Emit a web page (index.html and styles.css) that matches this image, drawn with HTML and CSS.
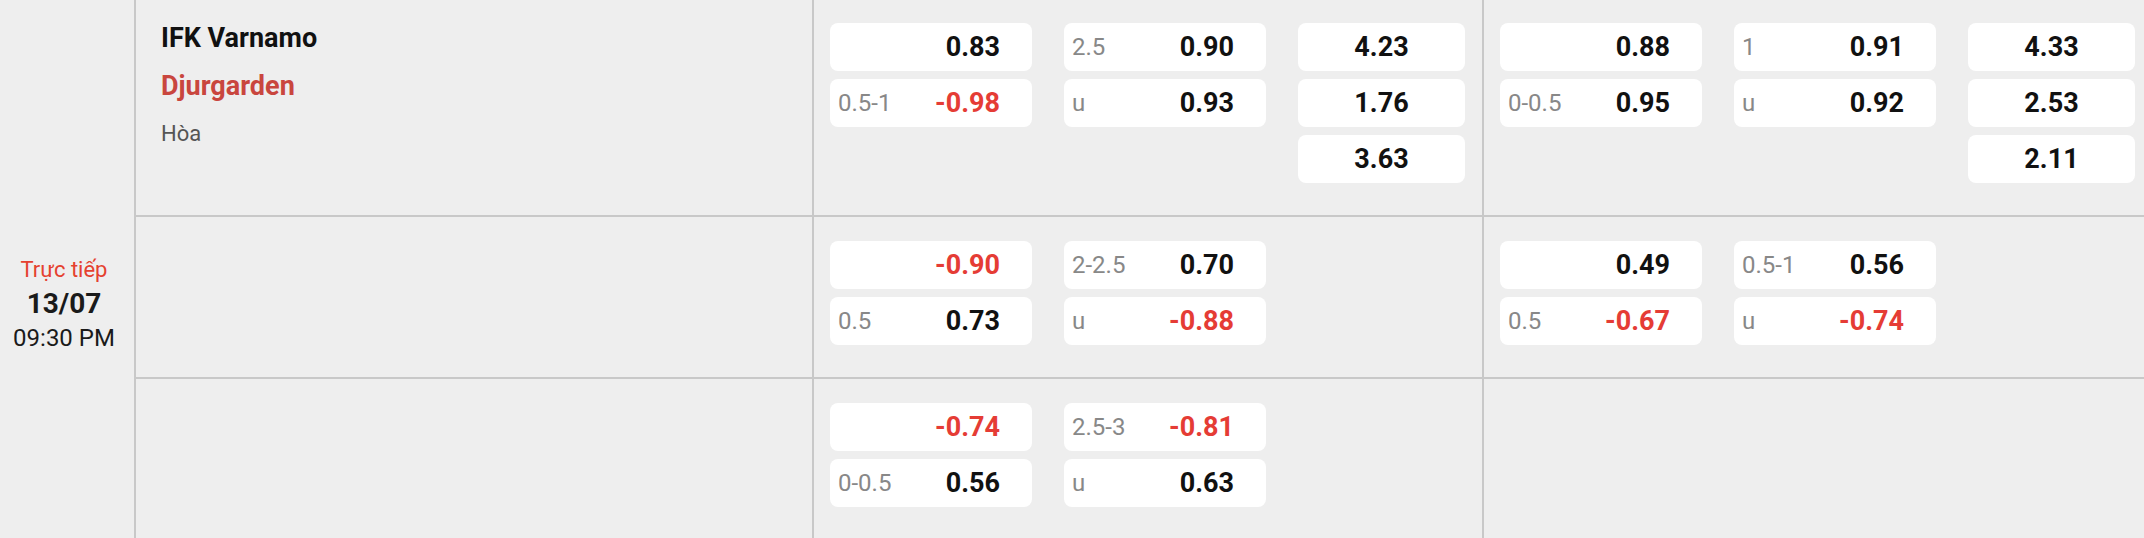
FILE: index.html
```html
<!DOCTYPE html>
<html lang="vi">
  <head>
    <meta charset="UTF-8" />
    <meta name="viewport" content="width=device-width, initial-scale=1.0" />
    <title>Kèo trực tiếp</title>
    <link rel="stylesheet" href="styles.css">
  </head>
  <body>
    <div class="match">
      <!-- Time column -->
      <div class="time-col">
        <div class="live">Trực tiếp</div>
        <div class="date">13/07</div>
        <div class="hour">09:30 PM</div>
      </div>

      <div class="rows">
        <!-- Row 1 -->
        <div class="row first">
          <div class="teams">
            <div class="home">IFK Varnamo</div>
            <div class="away">Djurgarden</div>
            <div class="draw">Hòa</div>
          </div>
          <div class="market">
            <div class="odds-col">
              <div class="box"><span class="lbl"></span><span class="val">0.83</span></div>
              <div class="box"><span class="lbl">0.5-1</span><span class="val neg">-0.98</span></div>
            </div>
            <div class="odds-col">
              <div class="box"><span class="lbl">2.5</span><span class="val">0.90</span></div>
              <div class="box"><span class="lbl">u</span><span class="val">0.93</span></div>
            </div>
            <div class="odds-col narrow">
              <div class="box center"><span class="val">4.23</span></div>
              <div class="box center"><span class="val">1.76</span></div>
              <div class="box center"><span class="val">3.63</span></div>
            </div>
          </div>
          <div class="market last">
            <div class="odds-col">
              <div class="box"><span class="lbl"></span><span class="val">0.88</span></div>
              <div class="box"><span class="lbl">0-0.5</span><span class="val">0.95</span></div>
            </div>
            <div class="odds-col">
              <div class="box"><span class="lbl">1</span><span class="val">0.91</span></div>
              <div class="box"><span class="lbl">u</span><span class="val">0.92</span></div>
            </div>
            <div class="odds-col narrow">
              <div class="box center"><span class="val">4.33</span></div>
              <div class="box center"><span class="val">2.53</span></div>
              <div class="box center"><span class="val">2.11</span></div>
            </div>
          </div>
        </div>

        <!-- Row 2 -->
        <div class="row">
          <div class="teams"></div>
          <div class="market">
            <div class="odds-col">
              <div class="box"><span class="lbl"></span><span class="val neg">-0.90</span></div>
              <div class="box"><span class="lbl">0.5</span><span class="val">0.73</span></div>
            </div>
            <div class="odds-col">
              <div class="box"><span class="lbl">2-2.5</span><span class="val">0.70</span></div>
              <div class="box"><span class="lbl">u</span><span class="val neg">-0.88</span></div>
            </div>
            <div class="odds-col narrow"></div>
          </div>
          <div class="market last">
            <div class="odds-col">
              <div class="box"><span class="lbl"></span><span class="val">0.49</span></div>
              <div class="box"><span class="lbl">0.5</span><span class="val neg">-0.67</span></div>
            </div>
            <div class="odds-col">
              <div class="box"><span class="lbl">0.5-1</span><span class="val">0.56</span></div>
              <div class="box"><span class="lbl">u</span><span class="val neg">-0.74</span></div>
            </div>
            <div class="odds-col narrow"></div>
          </div>
        </div>

        <!-- Row 3 -->
        <div class="row">
          <div class="teams"></div>
          <div class="market">
            <div class="odds-col">
              <div class="box"><span class="lbl"></span><span class="val neg">-0.74</span></div>
              <div class="box"><span class="lbl">0-0.5</span><span class="val">0.56</span></div>
            </div>
            <div class="odds-col">
              <div class="box"><span class="lbl">2.5-3</span><span class="val neg">-0.81</span></div>
              <div class="box"><span class="lbl">u</span><span class="val">0.63</span></div>
            </div>
            <div class="odds-col narrow"></div>
          </div>
          <div class="market last"></div>
        </div>
      </div>
    </div>
  </body>
</html>
```

FILE: styles.css
```css
/* Page */
body {
  margin: 0;
  font-family: 'Roboto', 'Liberation Sans', sans-serif;
  background-color: #eeeeee;
  overflow: hidden;
}

.match {
  display: flex;
  width: 2200px;
}

/* Time column on the left */
.time-col {
  width: 128px;
  padding: 254px 6px 0 0;
  border-right: 2px solid #c8c8c8;
  text-align: center;
}

.live {
  font-size: 22px;
  line-height: 32px;
  color: #e5412f;
}

.date {
  font-size: 28px;
  line-height: 36px;
  font-weight: 700;
  color: #1a1a1a;
}

.hour {
  font-size: 24px;
  line-height: 32px;
  color: #1a1a1a;
}

/* Rows */
.rows {
  display: flex;
  flex-direction: column;
}

.row {
  display: flex;
  border-bottom: 2px solid #c8c8c8;
}

/* Team names */
.teams {
  width: 651px;
  padding: 14px 0 0 25px;
  border-right: 2px solid #c8c8c8;
}

.home,
.away,
.draw {
  line-height: 48px;
}

.home {
  font-size: 27px;
  font-weight: 700;
  color: #111;
}

.away {
  font-size: 27px;
  font-weight: 700;
  color: #c9463e;
}

.draw {
  font-size: 22px;
  color: #555;
}

/* Odds markets */
.market {
  display: flex;
  gap: 32px;
  width: 635px;
  padding: 24px 17px 24px 16px;
  border-right: 2px solid #c8c8c8;
}

.market.last {
  border-right: none;
}

.row.first .market {
  padding-top: 23px;
}

.odds-col {
  width: 202px;
}

.odds-col.narrow {
  width: 167px;
}

.box {
  display: flex;
  justify-content: space-between;
  align-items: center;
  height: 48px;
  margin-bottom: 8px;
  padding: 0 32px 0 8px;
  background-color: #fff;
  border-radius: 8px;
}

.box.center {
  justify-content: center;
  padding: 0;
}

.lbl {
  font-size: 24px;
  color: #888;
}

.val {
  font-size: 27px;
  font-weight: 700;
  color: #111;
}

.val.neg {
  color: #e53c35;
}
```
